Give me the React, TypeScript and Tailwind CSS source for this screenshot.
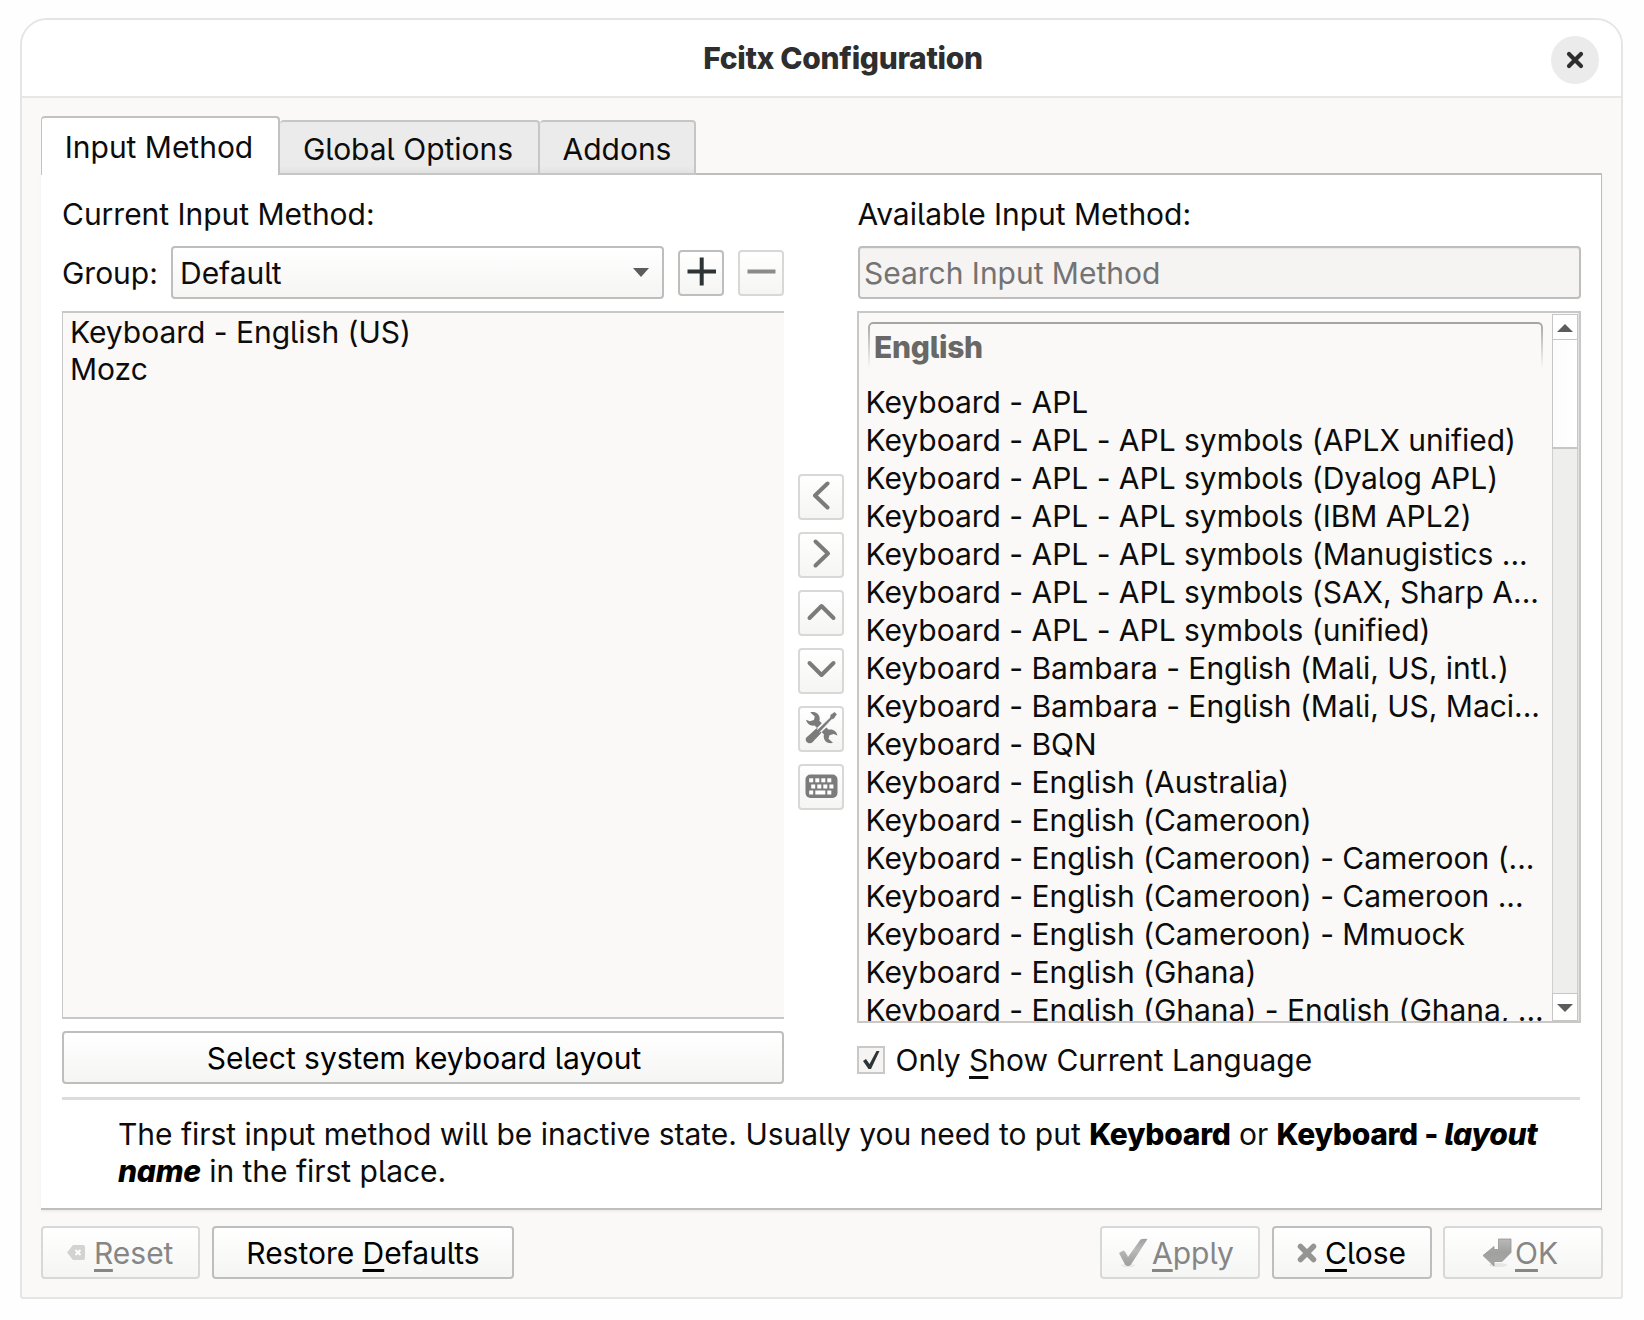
import type { ReactNode } from 'react';

const available = [
  'Keyboard - APL',
  'Keyboard - APL - APL symbols (APLX unified)',
  'Keyboard - APL - APL symbols (Dyalog APL)',
  'Keyboard - APL - APL symbols (IBM APL2)',
  'Keyboard - APL - APL symbols (Manugistics ...',
  'Keyboard - APL - APL symbols (SAX, Sharp A...',
  'Keyboard - APL - APL symbols (unified)',
  'Keyboard - Bambara - English (Mali, US, intl.)',
  'Keyboard - Bambara - English (Mali, US, Maci...',
  'Keyboard - BQN',
  'Keyboard - English (Australia)',
  'Keyboard - English (Cameroon)',
  'Keyboard - English (Cameroon) - Cameroon (...',
  'Keyboard - English (Cameroon) - Cameroon ...',
  'Keyboard - English (Cameroon) - Mmuock',
  'Keyboard - English (Ghana)',
  'Keyboard - English (Ghana) - English (Ghana, ...',
];

const face = 'bg-linear-to-b from-white to-[#f5f5f4]';

function Key({ children }: { children: string }) {
  return (
    <span className="underline decoration-[2.5px] underline-offset-[5px] [text-decoration-skip-ink:none]">
      {children}
    </span>
  );
}

function Button({ className, disabled, children }: { className: string; disabled?: boolean; children: ReactNode }) {
  return (
    <button
      className={`flex h-[53px] items-center rounded-[4px] border-2 whitespace-nowrap ${face} ${
        disabled ? 'border-[#d8d8d7] text-[#868686]' : 'border-[#bebebd] text-black'
      } ${className}`}
    >
      {children}
    </button>
  );
}

function ToolButton({ children, enabled }: { children: ReactNode; enabled?: boolean }) {
  return (
    <button
      className={`h-[46px] w-[46px] shrink-0 rounded-[4px] border-2 ${face} ${
        enabled ? 'border-[#bebebd]' : 'border-[#d8d8d7]'
      }`}
    >
      <svg viewBox="0 0 46 46" className="-mt-0.5 -ml-0.5 block h-[46px] w-[46px] max-w-none" fill="none">
        {children}
      </svg>
    </button>
  );
}

function Chevron({ d }: { d: string }) {
  return <path d={d} stroke="#7b7b7b" strokeWidth="4" strokeLinecap="round" strokeLinejoin="round" />;
}

function Square({ x, y, w = 4 }: { x: number; y: number; w?: number }) {
  return <rect x={x} y={y} width={w} height="4" fill="#fff" />;
}

function ScrollArrow({ up }: { up?: boolean }) {
  return (
    <svg viewBox="0 0 16 8" className="h-2 w-4" fill="#5c5c5c">
      <path d={up ? 'M8 0 16 8H0Z' : 'M0 0H16L8 8Z'} />
    </svg>
  );
}

export default function App() {
  return (
    <div className="h-[1320px] w-[1644px] overflow-hidden bg-[#fefefe] pt-[18px] pl-[20px] font-['Inter',sans-serif] text-[30px] leading-[38px] tracking-[-0.02px] text-[#0c0c0c] [font-feature-settings:'cv05']">
      <div className="flex h-[1281px] w-[1603px] flex-col overflow-hidden rounded-t-[27px] rounded-b-[3px] border-2 border-[#e5e5e4] bg-[#faf9f7]">
        <header className="flex h-[78px] shrink-0 items-center border-b-2 border-[#e8e7e5] bg-white">
          <div className="ml-[89px] flex-1 text-center font-extrabold tracking-[-0.32px] text-[#2e2e2e]">
            Fcitx Configuration
          </div>
          <button className="mt-[3px] mr-[22px] -ml-[24px] flex h-12 w-12 items-center justify-center rounded-full bg-[#ebebeb]">
            <svg viewBox="0 0 18 18" className="h-[18px] w-[18px]" stroke="#2e2e2e" strokeWidth="4.2" strokeLinecap="round">
              <path d="M3 3 15 15M15 3 3 15" />
            </svg>
          </button>
        </header>

        <div className="relative z-10 mt-[18px] -mb-[2px] flex h-[59px] shrink-0 items-end pl-[19px]">
          <div className="h-[59px] w-[239px] rounded-t-[4px] border-t-2 border-r-2 border-l border-[#c3c2c1] bg-white pt-[10px] pr-[2px] text-center">
            Input Method
          </div>
          <div className="h-[55px] w-[260px] rounded-t-[4px] border-2 border-l-0 border-[#c6c6c5] bg-linear-to-b from-[#ebebeb] from-85% to-[#e2e2e2] pt-[8px] pr-[2px] text-center">
            Global Options
          </div>
          <div className="h-[55px] w-[156px] rounded-t-[4px] border-2 border-l-0 border-[#c6c6c5] bg-linear-to-b from-[#ebebeb] from-85% to-[#e2e2e2] pt-[8px] text-center">
            Addons
          </div>
        </div>

        <main className="mx-[19px] h-[1037px] w-[1561px] shrink-0 border-t-2 border-r-[1.5px] border-b-2 border-[#bfbebd] bg-white pl-[21px] shadow-[0_2px_2px_#efeeec]">
          <div className="flex h-[910px]">
            <section className="w-[722px]">
              <div className="pt-[20px]">Current Input Method:</div>
              <div className="mt-[13px] flex h-[53px] items-center">
                <span className="w-[109px]">Group:</span>
                <div className={`flex h-[53px] w-[493px] items-center justify-between rounded-[4px] border-2 border-[#bebebd] pr-[13px] pl-[7px] ${face}`}>
                  <span>Default</span>
                  <svg viewBox="0 0 16 9" className="h-[9px] w-4" fill="#5c5c5c">
                    <path d="M0 0H16L8 9Z" />
                  </svg>
                </div>
                <div className="ml-[14px] flex gap-[14px]">
                  <ToolButton enabled>
                    <path d="M9.5 21.5H38M23.7 7.5V35.5" stroke="#2e3436" strokeWidth="4" />
                  </ToolButton>
                  <ToolButton>
                    <path d="M9.500 21.5H37.500" stroke="#8b8b8b" strokeWidth="4" />
                  </ToolButton>
                </div>
              </div>
              <ul className="mt-[12px] h-[708px] border-t-2 border-b-2 border-l border-[#c9c8c7] bg-[#faf9f7] pl-[7px]">
                <li>Keyboard - English (US)</li>
                <li className="-mt-px">Mozc</li>
              </ul>
              <Button className="mt-[12px] w-full justify-center pt-px pl-[2px]">Select system keyboard layout</Button>
            </section>

            <div className="ml-[14px] flex w-[60px] flex-col gap-3 pt-[299px]">
              <ToolButton>
                <Chevron d="M29.5 9.5 17 21.5 29.5 33.5" />
              </ToolButton>
              <ToolButton>
                <Chevron d="M17.5 9.5 30 21.5 17.5 33.5" />
              </ToolButton>
              <ToolButton>
                <Chevron d="M11.5 28 23.5 16 35.5 28" />
              </ToolButton>
              <ToolButton>
                <Chevron d="M11.5 15 23.5 27 35.5 15" />
              </ToolButton>
              <ToolButton>
                <g transform="translate(7.5 5.500)" fill="#7b7b7b">
                  <path d="M4.8 1C9-.6 14 2 14.2 7c0 1-.1 1.6-.3 2.3l2.400 2.400-4.800 4.700-2.400-2.400C5 14.900 1.200 12 .6 8.200L4.300 9.700 8.400 8.500 9.300 5Z" />
                  <path d="M27.500 31.300C23.300 32.900 18.300 30 18.200 25.300c0-1 .1-1.600.3-2.300l-2.400-2.400 4.800-4.700 2.400 2.400C27.500 17.300 31.200 20 31.900 24L28.100 22.600 24 23.800 23 27.300Z" />
                  <path d="M11.500 16.500 16 21 7 30.800C3.500 33.500-1.700 29.500.9 25.900Z" />
                  <path d="M11 19 24.500 6 24.500 3.500 29 .2 31.600 2.800 28.500 7.500 26.200 8 13.500 21.500Z" stroke="#fafafa" strokeWidth=".7" />
                  <path d="M10.500 17.500 15 22 10 27 6 22Z" />
                </g>
              </ToolButton>
              <ToolButton>
                <rect x="7.500" y="10.500" width="32" height="23.500" rx="5" fill="#7b7b7b" />
                <Square x={11.2} y={14.3} />
                <Square x={17.3} y={14.3} />
                <Square x={23.3} y={14.3} />
                <Square x={29.3} y={14.3} />
                <Square x={13.2} y={20.5} />
                <Square x={19.3} y={20.5} />
                <Square x={25.3} y={20.5} />
                <Square x={31.4} y={20.5} />
                <Square x={11.2} y={26.5} />
                <Square x={17.3} y={26.5} w={10} />
                <Square x={29.3} y={26.5} />
              </ToolButton>
            </div>

            <section className="w-[723px]">
              <div className="-ml-[0.5px] pt-[20px]">Available Input Method:</div>
              <div className="mt-[13px] flex h-[53px] items-center rounded-[4px] border-2 border-[#bebebd] bg-[#f5f4f2] pl-[4px] text-[#737373] shadow-[inset_0_1px_1px_#e8e7e5]">
                Search Input Method
              </div>
              <div className="-ml-px mt-[12px] flex h-[712px] border-2 border-[#c9c8c7] bg-[#faf9f7]">
                <div className="min-w-0 flex-1 overflow-hidden pt-[9px] pl-[6px]">
                  <div className="ml-[3px] flex h-[61px] w-[675px]">
                    <div className="h-[46px] w-full rounded-t-[5px] border-2 border-b-0 border-[#a3a3a2] [mask-image:linear-gradient(black,transparent)]" />
                    <div className="-ml-[669px] w-[669px] pt-[6px] font-extrabold tracking-[-0.3px] text-[#686867]">English</div>
                  </div>
                  <ul className="pl-[0.5px]">
                    {available.map((name) => (
                      <li key={name} className="h-[38px] whitespace-nowrap">
                        {name}
                      </li>
                    ))}
                  </ul>
                </div>
                <div className="flex w-[27px] shrink-0 flex-col border-r border-[#e2e2e1] pt-px">
                  <div className="flex h-[26px] items-center justify-center border border-[#c6c6c5] bg-white pt-[2px]">
                    <ScrollArrow up />
                  </div>
                  <div className="h-[109px] border border-t-0 border-b-2 border-[#c6c6c5] bg-linear-to-r from-[#fcfcfc] to-white" />
                  <div className="flex-1 border-x border-[#cfcfce] bg-[#eeeeec]" />
                  <div className="flex h-[28px] items-center justify-center border border-[#c6c6c5] bg-white pt-[2px]">
                    <ScrollArrow />
                  </div>
                </div>
              </div>
              <label className="mt-[18px] -ml-px flex items-center">
                <span className="flex h-[28px] w-[28px] items-center justify-center border-2 border-[#c9c8c7] bg-[#f5f4f2]">
                  <svg viewBox="0 0 18 20" className="h-5 w-[18px]" fill="#2e3436">
                    <path d="M1 11 4 9 7.500 14 14.500 1H17.500L9 19H6.500Z" />
                  </svg>
                </span>
                <span className="ml-[10.5px]">
                  Only <Key>S</Key>how Current Language
                </span>
              </label>
            </section>
          </div>

          <div className="mt-[12px] w-[1518px] border-t-3 border-[#dcdcdb]" />
          <p className="mt-[16px] pl-[56px] leading-[37px] tracking-[-0.02px] whitespace-nowrap">
            The first input method will be inactive state. Usually you need to put{' '}
            <b className="font-extrabold tracking-[-0.28px] text-black">Keyboard</b> or{' '}
            <b className="font-extrabold tracking-[-0.28px] text-black">
              Keyboard - <i className="[font-feature-settings:'cv05','cv11']">layout</i>
              <br />
              <i className="[font-feature-settings:'cv05','cv11']">name</i>
            </b>{' '}
            in the first place.
          </p>
        </main>

        <footer className="mt-[16px] flex pr-[18px] pl-[19px]">
          <Button disabled className="w-[159px] pl-[24px]">
            <svg viewBox="0 0 18 15" className="mr-[9px] h-[15px] w-[18px]">
              <path d="M6 0H16Q18 0 18 2V13Q18 15 16 15H6L0 7.500Z" fill="#d3d3d2" />
              <path d="M8.500 5 13.500 10M13.500 5 8.500 10" stroke="#fff" strokeWidth="1.8" />
            </svg>
            <span><Key>R</Key>eset</span>
          </Button>
          <Button className="ml-[12px] w-[302px] justify-center">
            <span>Restore <Key>D</Key>efaults</span>
          </Button>
          <div className="flex-1" />
          <Button disabled className="w-[160px] pl-[16px]">
            <svg viewBox="0 0 30 30" className="mr-[4px] h-[30px] w-[30px]">
              <defs>
                <linearGradient id="check" x1="0" y1="0" x2="0" y2="1">
                  <stop offset="0" stopColor="#a0a09f" />
                  <stop offset=".4" stopColor="#bababa" />
                  <stop offset="1" stopColor="#9d9d9c" />
                </linearGradient>
              </defs>
              <ellipse cx="10" cy="27.500" rx="7" ry="1.800" fill="#e9e9e8" />
              <path d="M1 15 5.500 12.500Q8 14 10 19L22.500 1.500Q25 .5 29.500 1L13 26.500Q10 29.500 7 26.500Q4 21 1 15Z" fill="url(#check)" />
            </svg>
            <span><Key>A</Key>pply</span>
          </Button>
          <Button className="ml-[12px] w-[160px] pl-[23px]">
            <svg viewBox="0 0 20 20" className="mr-[8px] h-5 w-5" stroke="#959592" strokeWidth="5.500" strokeLinecap="round">
              <path d="M3.500 3.500 16.500 16.500M16.500 3.500 3.500 16.500" />
            </svg>
            <span><Key>C</Key>lose</span>
          </Button>
          <Button disabled className="ml-[11px] w-[160px] pl-[37px]">
            <svg viewBox="0 0 30 30" className="mr-[3px] h-[30px] w-[30px]">
              <defs>
                <linearGradient id="enter" x1="0" y1="0" x2="0" y2="1">
                  <stop offset="0" stopColor="#b9b9b8" />
                  <stop offset=".5" stopColor="#a0a09f" />
                  <stop offset="1" stopColor="#a8a8a7" />
                </linearGradient>
              </defs>
              <ellipse cx="16" cy="27" rx="9" ry="2" fill="#e6e6e5" />
              <path d="M16.500 1H29V14.500L20 23.500H12V28L1 17.500 12 8.500V11.500H16.500Z" fill="url(#enter)" stroke="#969695" strokeWidth=".8" strokeLinejoin="round" />
            </svg>
            <span><Key>O</Key>K</span>
          </Button>
        </footer>
      </div>
    </div>
  );
}
